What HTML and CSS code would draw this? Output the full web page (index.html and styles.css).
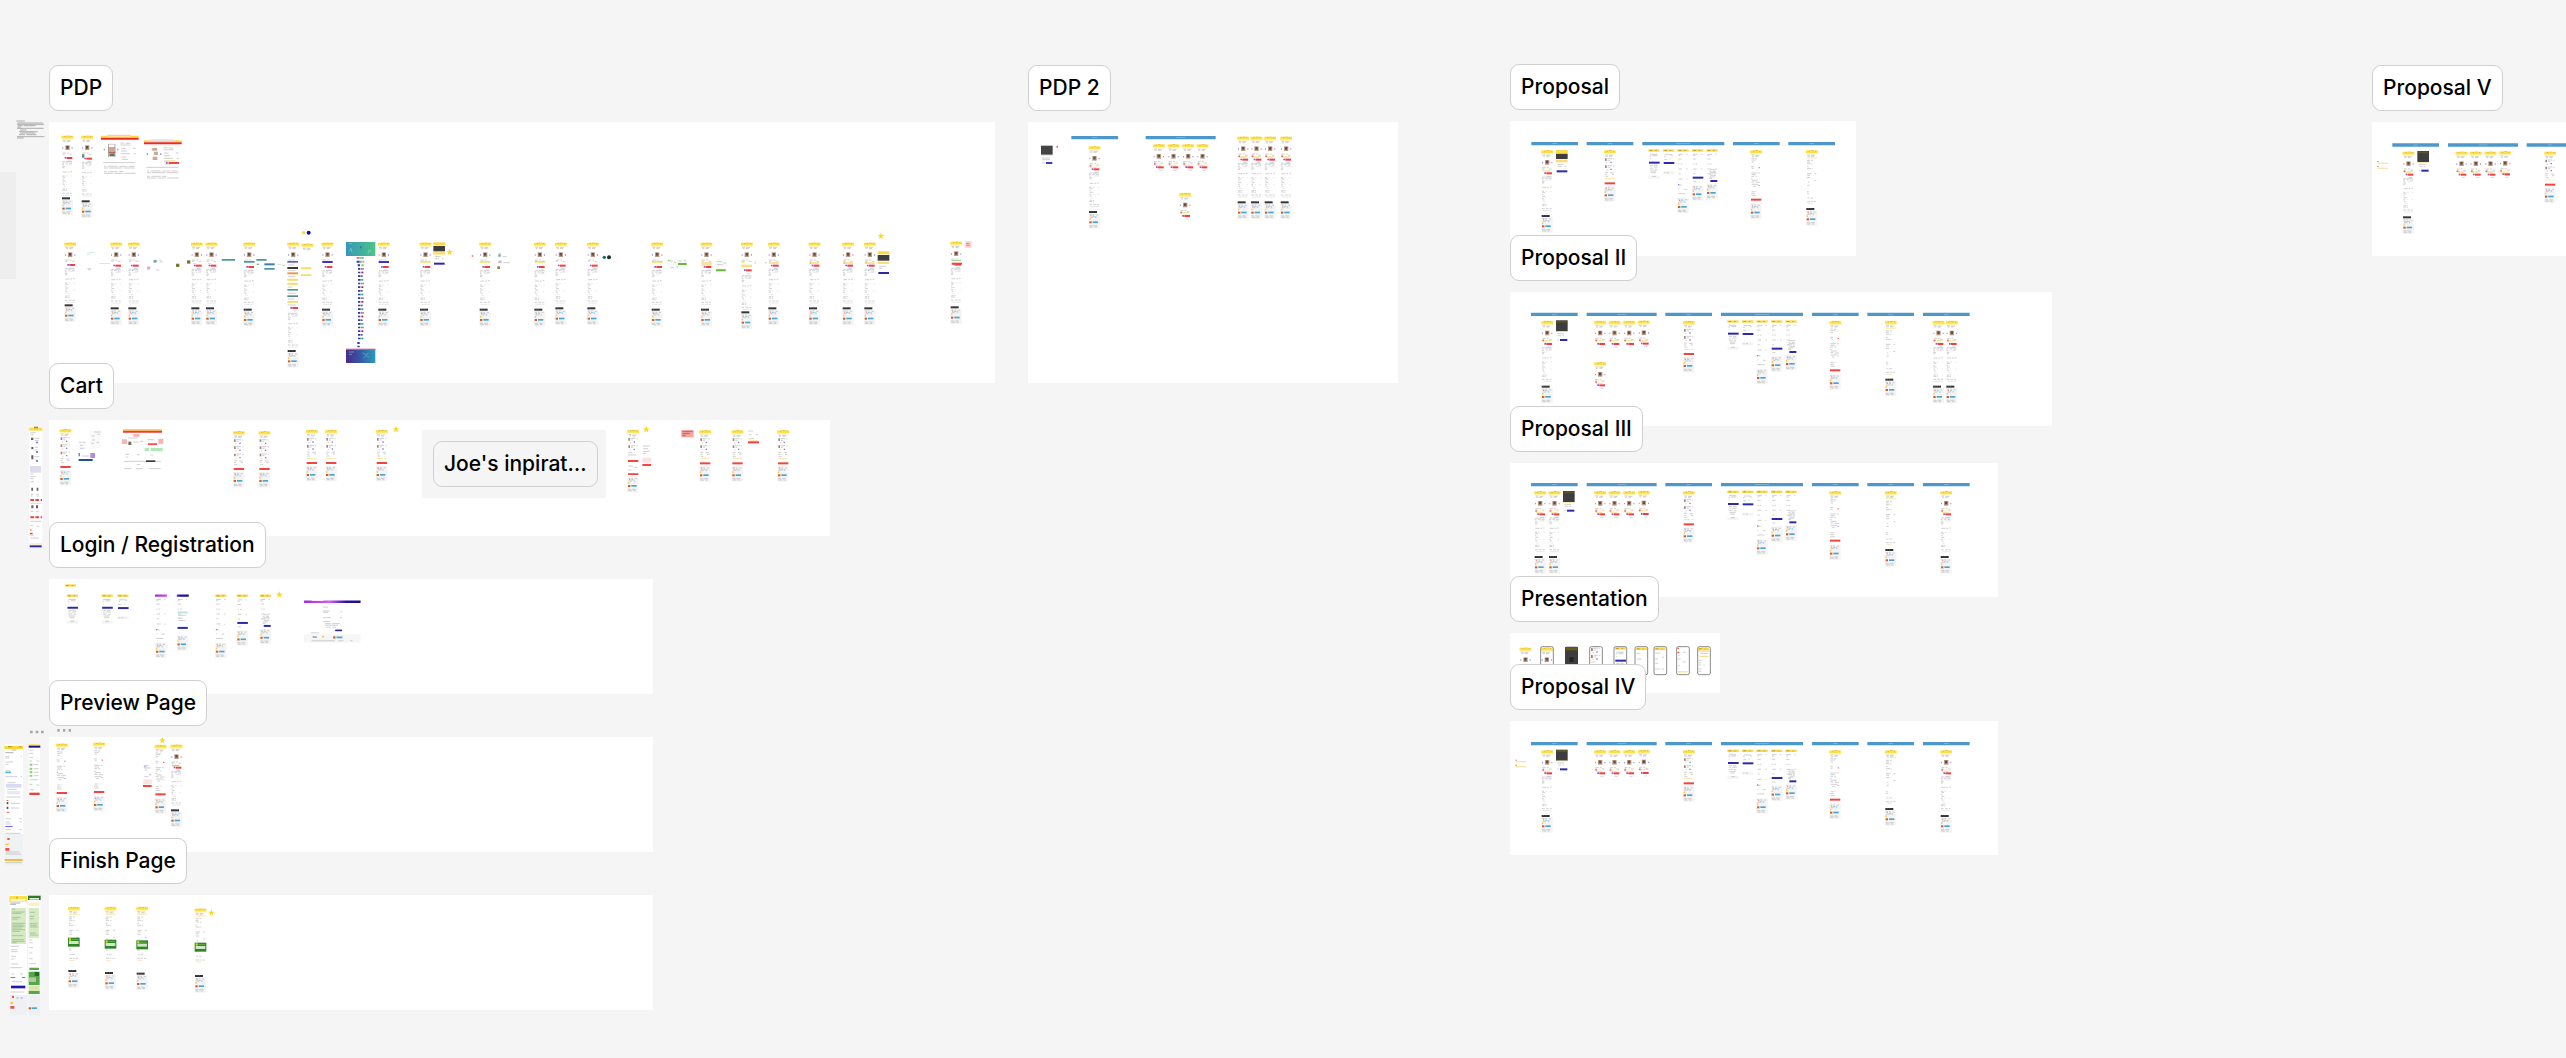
FILE: index.html
```
<!DOCTYPE html>
<html lang="en">
<head>
<meta charset="utf-8">
<title>Checkout flow board</title>
<link rel="stylesheet" href="styles.css">
</head>
<body>
<!-- Shared miniature screens. One board pixel is three drawing units. -->
<svg class="library" aria-hidden="true">
  <defs>
    <linearGradient id="teal"><stop offset="0" stop-color="#3796b8"/><stop offset="1" stop-color="#4cc487"/></linearGradient>
    <linearGradient id="night"><stop offset="0" stop-color="#4c2a85"/><stop offset=".5" stop-color="#3659a5"/><stop offset="1" stop-color="#2b9bba"/></linearGradient>
    <linearGradient id="violet"><stop offset="0" stop-color="#a02bd8"/><stop offset=".45" stop-color="#d95cea"/><stop offset=".75" stop-color="#2a1099"/><stop offset="1" stop-color="#1d0d91"/></linearGradient>

    <path id="star" fill="#fbd92b" d="M0-10L3-3 10-3 4 2 6 9 0 5-6 9-4 2-10-3-3-3z"/>

    <g id="head">
      <path fill="#fff3ae" d="M0 1h35v13H0z"/>
      <path fill="#fde047" d="M0 3h35v7H0z"/>
      <path fill="#dcb83a" d="M8 3h4v3H8zm7-1h8v2h-8zm12 1h3v3h-3z"/>
      <path class="ink" d="M3 16h9m3 1h12M5 20h6m4 0h9"/>
    </g>
    <g id="photo">
      <path fill="#b99d88" d="M11 31h13v14H11z"/>
      <path fill="#6d4a3b" d="M14 33h7v8h-7z"/>
      <path fill="#8f93f2" d="M2 37h3v4H2zm28 0h3v4h-3z"/>
      <path class="ink" d="M3 54h10m3 0h6M3 58h6m14 0h8"/>
    </g>
    <g id="cta">
      <path fill="#6b63f0" d="M9 1h5v5H9z"/>
      <path fill="#fb3b3b" d="M15 1h17v6H15z"/>
      <path fill="#c5c5fa" d="M18 12h10v2H18z"/>
    </g>
    <g id="body">
      <path class="ink" d="M3 2h8m2 0h18M1 6h6m4 0h8m3 1h9M2 11h5M2 16h8M2 20h6M3 33h12m3 0h5m3-1h5M2 45h6M3 49h8M2 55h4M3 60h9M2 66h5M4 71h5M3 84h7m2 0h4M2 88h8m2 1h3M2 97h8m4 0h8m3 0h6"/>
      <path class="ink-soft" d="M14 11h16M12 45h6m10 0h4M12 66h3m12 0h4M6 77h7M4 103h27"/>
    </g>
    <g id="mini">
      <path fill="#f4f4f4" d="M0 0h34v46H0z"/>
      <path class="ink" d="M3 4h6m3 0h5m6 1h6M4 12h10m5 0h5M2 37h9m3 0h12M3 41h11m4 0h7"/>
      <path fill="#f28e82" d="M5 6h4v3H5z"/>
      <path fill="#8dc9ef" d="M12 7h6v3h-6zm8 1h3v2h-3z"/>
      <path fill="#ffc94d" d="M2 15h4v5H2z"/>
      <path fill="#d0602a" d="M2 24h7v6H2z"/>
      <path fill="#4aa5d3" d="M12 24h16v5H12z"/>
    </g>
    <g id="foot">
      <use href="#mini" y="7"/>
      <path fill="#333" d="M1 0h24v6H1z"/>
      <path fill="#777" d="M6 1h2v2H6zm7 0h2v2h-2z"/>
    </g>

    <g id="top"><use href="#head"/><use href="#photo"/></g>
    <g id="pdp"><use href="#top"/><use href="#cta" y="67"/><use href="#body" y="80"/><use href="#foot" y="196"/></g>
    <g id="pdp-short"><use href="#top"/><use href="#cta" y="65"/><use href="#body" y="78"/><use href="#foot" y="187"/></g>
    <g id="pdp-bar"><use href="#top"/><use href="#cta" y="71"/><use href="#body" y="84"/><use href="#foot" y="200"/></g>
    <g id="offer"><path fill="#f8dc8e" d="M2 60h28v2H2zm3 4h20v2H5z"/><path fill="#f4635a" d="M3 59h5v4H3z"/></g>
    <g id="pdp-offer"><use href="#pdp"/><use href="#offer"/></g>
    <g id="teaser"><use href="#top"/><use href="#offer"/><use href="#cta" y="67"/></g>

    <g id="item">
      <path fill="#9b8983" d="M3 1h5v8H3z"/>
      <path class="ink" d="M10 2h14m3 1h4M11 7h6"/>
      <path fill="#7777ee" d="M19 11h4v4h-4z"/>
      <path fill="#f6c8c0" d="M7 13h4v3H7z"/>
    </g>
    <g id="cart">
      <use href="#head"/><use href="#item" y="25"/><use href="#item" y="46"/><use href="#item" y="68"/>
      <path class="ink" d="M3 90h9m7 1h10M3 96h6m14 0h7M4 102h9"/>
      <path fill="#f5433f" d="M2 112h31v6H2z"/><use href="#mini" y="124"/>
    </g>
    <g id="cart-short">
      <use href="#head"/><use href="#item" y="25"/><use href="#item" y="46"/>
      <path class="ink" d="M3 68h9m7 1h10M3 74h6m14 0h7M4 80h9"/>
      <path fill="#f8dc8e" d="M3 86h18v2H3zm21 0h7v2h-7z"/>
      <path fill="#f5433f" d="M2 98h31v6H2z"/><use href="#mini" y="110"/>
    </g>
    <g id="preview">
      <use href="#head"/>
      <path class="ink" d="M3 26h8m3 1h6M3 31h13M4 37h7M2 51h9M4 56h6M3 70h16m3 0h6M4 75h12M3 80h8m4 0h5M5 92h17M3 97h9m4 1h13M4 104h20M8 110h8M4 126h9m3 0h3M2 132h12M3 138h14"/>
      <path fill="#f4635a" d="M25 53h4v3h-4z"/><path fill="#a9a5f0" d="M3 86h3v3H3zm21 20h5v2h-5z"/>
      <path fill="#f5433f" d="M2 147h31v6H2z"/><use href="#mini" y="162"/>
    </g>
    <g id="receipt">
      <use href="#head"/><path fill="#fdedb8" d="M2 22h32v4H2z"/>
      <path class="ink" d="M3 32h9m3 0h6M3 37h8M3 42h10m3 1h4M3 51h5M3 57h12m2 0h3M3 72h13m9 0h6M4 77h8M3 84h10M6 98h4m15-5h6M4 107h7M3 126h5M3 131h7M5 145h5m3 0h8M3 156h10m2 0h5m3 0h7"/>
      <path fill="#f3dcae" d="M5 161h14v2H5z"/>
    </g>
    <g id="finish"><use href="#receipt"/><use href="#foot" y="175"/></g>
    <g id="voucher">
      <path fill="#2f8527" d="M0 0h35v27H0z"/><path fill="#cfe7c5" d="M3 10h29v9H3z"/><path fill="#e9d42e" d="M3 2h6v7H3z"/><path fill="#5aaa43" d="M11 4h20v3H11z"/>
      <use href="#foot" y="97"/>
    </g>

    <g id="bar"><path fill="#fbd94b" d="M0 1h34v7H0z"/><path fill="#c29d2c" d="M4 3h8v3H4zm16 1h6v2h-6z"/></g>
    <g id="login-a">
      <use href="#bar"/>
      <path class="ink" d="M5 16h22M3 21h5m4-1h14M4 29h3M5 49h9m3 0h10M6 54h5m4 0h13M4 60h12m4 1h7M6 66h19M8 71h15"/>
      <path fill="#2c29ad" d="M2 38h32v6H2z"/><path fill="#f4f4f4" d="M0 80h34v9H0z"/><path class="ink" d="M11 82h12"/>
    </g>
    <g id="login-b">
      <use href="#bar"/><path class="ink" d="M5 17h22M3 22h5m17-2h5M4 31h8m8-1h3"/>
      <path fill="#2c29ad" d="M2 39h32v6H2z"/><path fill="#f4f4f4" d="M0 67h34v9H0z"/><path class="ink" d="M4 71h4m4 0h6"/>
    </g>
    <g id="fields"><path class="ink" d="M3 16h14m10 0h4M3 20h6M3 30h10M3 45h4m3 0h5M4 60h10m13 0h4M4 74h6"/></g>
    <g id="login-c">
      <use href="#fields"/>
      <path class="ink" d="M4 90h12m11 1h3M5 108h8M3 120h3m14 1h8M3 134h21"/><path fill="#8b84ec" d="M2 105h4v4H2z"/>
      <use href="#mini" y="147"/>
    </g>
    <g id="login-d"><use href="#fields"/><path fill="#2c29ad" d="M2 83h32v6H2z"/><path class="ink" d="M4 98h9"/><use href="#mini" y="109"/></g>
    <g id="login-e">
      <use href="#fields"/><path class="ink" d="M12 62h15M9 67h6m4 0h9M11 71h18M8 75h12m3 0h5M12 80h17M10 84h14M8 88h9"/>
      <path fill="#2c29ad" d="M12 93h21v6H12z"/><use href="#mini" y="105"/>
    </g>
    <g id="login-set">
      <use href="#login-a"/><use href="#login-b" x="44"/><use href="#bar" x="87"/><use href="#login-c" x="87"/><use href="#bar" x="131"/><use href="#login-d" x="131"/><use href="#bar" x="174"/><use href="#login-e" x="174"/>
    </g>

    <g id="dark"><path fill="#3e3e3e" d="M0 0h35v33H0z"/><path fill="#57532b" d="M2 1h31v6H2z"/><path fill="#f6df92" d="M2 33h32v2H2z"/>
      <path class="ink" d="M4 40h20M5 46h10m4 0h5M4 58h5"/><path fill="#2c29ad" d="M12 56h22v6H12z"/></g>
    <g id="modal"><path fill="#fbd94b" d="M0 1h35v9H0z"/><path fill="#3e3e3e" d="M0 12h35v16H0z"/><path fill="#f9dd7b" d="M0 30h35v8H0z"/>
      <path class="ink" d="M4 44h18M5 50h12m8 0h6"/><path fill="#2c29ad" d="M2 62h32v6H2z"/></g>

    <g id="strip"><path fill="#4d97cb" d="M0 0h140v10H0z"/><path fill="#8dbfe2" d="M63 4h14v2H63z"/></g>
    <g id="strip-wide"><path fill="#4d97cb" d="M0 0h210v10H0z"/><path fill="#8dbfe2" d="M92 4h27v2H92z"/></g>
    <g id="strip-login"><path fill="#4d97cb" d="M0 0h246v10H0z"/><path fill="#8dbfe2" d="M102 4h42v2h-42z"/></g>

    <g id="flow">
      <use href="#strip" x="93"/><use href="#strip-wide" x="260"/><use href="#strip" x="496"/><use href="#strip-login" x="663"/>
      <use href="#strip" x="936"/><use href="#strip" x="1102"/><use href="#strip" x="1269"/>
      <use href="#teaser" x="283" y="23"/><use href="#teaser" x="326" y="23"/><use href="#teaser" x="370" y="23"/><use href="#teaser" x="414" y="22"/>
      <use href="#cart-short" x="549" y="23"/><use href="#login-set" x="682" y="22"/>
      <use href="#preview" x="988" y="23"/><use href="#finish" x="1155" y="23"/>
    </g>
  </defs>
</svg>

<main class="canvas">
  <div class="offstage" aria-hidden="true"></div>

  <svg class="loose" viewBox="0 0 225 3174" aria-hidden="true">
    <g transform="translate(0 150)">
      <path class="note" d="M49 213h26M52 219h76M51 223h81M54 227h14m3 0h36M52 231h11M51 235h80M60 240h19M57 245h56M60 249h46M57 254h18m4 0h30M51 260h82M51 264h20"/>
    </g>
    <g transform="translate(0 1200)">
      <path fill="#fff" d="M88 80h39v364H88z"/>
      <path fill="#fbd94b" d="M88 83h39v9H88z"/><path fill="#b08b2a" d="M102 80h12v5h-12z"/>
      <path class="ink" d="M91 98h16M92 104h9M104 115h14M104 122h12M104 142h10M104 150h8M104 170h14M104 180h8M92 222h8M92 230h16M91 236h10M92 245h10M92 283h9m8 0h7M92 288h6m12 0h8M92 334h9m8 0h7M91 364h33M91 376h9m10 3h7M92 406h9M91 414h26"/>
      <path fill="#6b5d60" d="M93 113h7v7h-7zm1 28h6v7h-6zm0 25h6v12h-6zm0 97h5v9h-5zm16 0h5v9h-5zm-16 53h6v9h-6zm14 0h6v9h-6z"/>
      <path fill="#7777ee" d="M108 125h6v5h-6zm0 28h6v5h-6zm0 28h6v5h-6z"/>
      <path fill="#dcdcec" d="M90 198h33v20H90z"/>
      <path fill="#ef423f" d="M91 297h11v6H91zm15 0h11v6h-11zm16 0h4v6h-4zM91 349h11v6H91zm15 0h11v6h-11zm16 0h4v6h-4zM90 398h8v5h-8z"/>
      <path fill="#f2a72e" d="M90 388h5v4h-5z"/><path fill="#b8d8ec" d="M91 309h33v2H91z"/>
      <path fill="#fbe9b0" d="M89 430h37v4H89z"/><path fill="#2c29ad" d="M89 436h36v6H89z"/>
    </g>
    <g transform="translate(0 2040)">
      <path fill="#a6a6a6" d="M90 152h8v8h-8zm17 0h8v8h-8zm16 0h8v8h-8zM172 147h7v8h-7zm17 0h7v8h-7zm17 0h7v8h-7z"/>
      <path fill="#fff" d="M14 192h55v270H14z"/><path fill="#f0f1f3" d="M14 462h55v95H14z"/>
      <path fill="#fdd835" d="M13 198h56v9H13z"/><path fill="#b08b2a" d="M24 199h12v3H24zm34 0h6v3h-6z"/>
      <path class="note" d="M35 210h14M16 218h24"/>
      <path class="ink" d="M16 229h12m34 0h4M16 234h12M17 246h22M17 253h9M16 272h14M16 290h36m10 0h4M22 308h24M22 328h28M18 351h44M31 370h28M32 384h26M17 416h15m26 0h8M17 426h12m31 0h6M17 432h16M16 449h17m25 0h8M16 460h46M18 516h40M17 522h46M16 548h50"/>
      <path fill="#d9dcf0" d="M18 312h46v11H18z"/><path fill="#e7e9f3" d="M22 333h38v10H22z"/>
      <path fill="#53525a" d="M20 366h5v7h-5zm0 14h5v7h-5z"/><path fill="#49b2df" d="M16 275h17v4H16z"/>
      <path fill="#ef5350" d="M16 504h12v8H16zM22 474h7v6h-7zM20 360h5v3h-5zm0 35h8v3h-8z"/><path fill="#6b63f0" d="M16 438h22v3H16z"/>
      <path fill="#fbc52b" d="M16 491h10v4H16z"/><path fill="#f6bd3c" d="M14 537h54v6H14z"/>
      <path fill="#fff" d="M86 192h34v154H86z"/><path fill="#fbd94b" d="M86 193h34v4H86z"/><path fill="#1b168c" d="M86 197h35v6H86z"/>
      <path class="ink" d="M89 211h10M88 220h12M89 233h10M88 243h8m14 0h8M100 254h15M101 266h15M101 277h15M101 287h15M89 299h24M88 313h10m12 2h8M90 329h12"/>
      <path fill="#8bd06b" d="M89 251h8v6h-8zm0 12h8v6h-8zm0 11h8v6h-8zm0 11h8v5h-8z"/><path fill="#e8413f" d="M88 338h31v7H88z"/>

      <path fill="#fff" d="M29 645h52v362H29zm56 0h36v362H85z"/>
      <path fill="#fbe04d" d="M28 648h53v17H28z"/><path fill="#f58c28" d="M49 650h4v6h-4z"/><path fill="#fff6c4" d="M33 657h43v6H33z"/>
      <path fill="#2d7a2c" d="M84 647h38v13H84z"/><path fill="#dff0d4" d="M88 654h29v5H88z"/><path fill="#fdf0bf" d="M86 668h32v10H86z"/>
      <path class="note" d="M31 669h30M31 673h17"/>
      <path fill="#d6eac4" d="M33 684h45v108H33zm53 0h31v90H86z"/>
      <path fill="none" stroke="#93b585" stroke-width="2" d="M36 688h10M36 696h38M36 700h28M36 712h26M36 717h19M36 730h39M36 735h34M36 739h38M36 744h30M36 749h39M36 754h24M36 767h34M36 779h36M36 784h38M36 788h14M90 697h15M90 709h13M90 716h11M90 731h23M90 736h20M90 741h23M90 759h17M90 765h24"/>
      <path class="ink" d="M31 799h26M33 809h18M33 815h20M34 829h14M33 837h10M33 852h22M31 863h36M33 882h10m17 0h9M36 905h30M31 936h42M40 952h24M33 988h12M32 996h40M88 780h8M88 788h10M88 803h11M88 819h9M88 836h10M88 851h20M88 951h16M88 972h8M88 997h16"/>
      <path fill="#7b77dd" d="M32 891h14v3H32zm34 0h10v3H66z"/><path fill="#2418a0" d="M33 917h43v8H33z"/>
      <path fill="#eef0f4" d="M29 945h52v62H29zm56 0h36v62H85z"/>
      <path fill="#ef5350" d="M31 978h12v8H31zm5-31h6v7h-6z"/><path fill="#fbc52b" d="M31 966h9v5h-9z"/>
      <path fill="#b3c5dd" d="M62 951h6v5h-6zm-12 0h5v5h-5z"/>
      <path fill="#55a846" d="M88 863h29v7H88zm-2 12h33v40H86zm0 58h33v9H86z"/><path fill="#b6c5a6" d="M87 892h21v14H87z"/><path fill="#226b2a" d="M104 876h13v12h-13z"/><path fill="#d7e7a9" d="M86 917h33v16H86z"/>
      <path fill="#d0602a" d="M86 982h7v6h-7z"/><path fill="#4aa5d3" d="M95 982h16v5H95z"/>
    </g>
  </svg>

  <section class="frame pdp">
    <h2 class="label">PDP</h2>
    <svg class="board" viewBox="147 213 2838 783" aria-hidden="true">
      <use href="#pdp-short" x="185" y="252"/><use href="#pdp" x="244" y="252"/>
      <path fill="#5d8c83" d="M246 310h7v10h-7z"/>
      <g id="desk"><path fill="#fbd94b" d="M303 254h113v6H303z"/><path fill="#fff" d="M322 253h70v3h-70z"/><path fill="#ee2a24" d="M303 260h113v6H303z"/>
        <path class="ink" d="M322 253h70M324 280h20M361 276h12m4 1h14M361 282h30M363 292h14m22 0h8M363 300h18M362 308h28m11 0h7M363 318h16M366 325h18M310 335h96M312 346h7m4 0h30m5 0h24m4 0h18M312 351h12m3 0h40m4 0h34M312 362h9m4 0h28m4 0h14M312 367h28m4 0h24m5 0h34"/>
        <path fill="#9796ee" d="M311 293h4v5h-4zm40 0h4v5h-4z"/></g>
      <path fill="#c9a792" d="M326 288h18v14h-18z"/><path fill="#cd5b55" d="M326 302h20v4h-20z"/><path fill="#4f7d56" d="M328 307h16v9h-16z"/><path fill="#8b7a72" d="M324 280h2v38h-2zm20 0h2v38h-2z"/>
      <use href="#desk" x="129" y="14"/>
      <path fill="#c6ab98" d="M457 291h14v8h-14zm5 11h12v10h-12zm-4 15h14v10h-14z"/><path fill="#f8dc8e" d="M494 328h32v3h-32z"/><path fill="#6b63f0" d="M498 333h5v5h-5z"/><path fill="#f5433f" d="M506 333h31v6h-31z"/>

      <circle cx="911" cy="545" r="5" fill="#fdd835"/><circle cx="926" cy="545" r="6" fill="#17129a"/>
      <use href="#pdp-short" x="193" y="573"/><use href="#pdp" x="331" y="573"/><use href="#pdp" x="384" y="573"/>
      <use href="#pdp" x="573" y="573"/><use href="#pdp" x="617" y="573"/><use href="#pdp-bar" x="730" y="573"/>
      <path fill="#cdeee2" d="M262 604h22v3h-22zm-2 5h10v2h-10zm38 27h32v3h-32z"/><path class="ink" d="M262 653h11m-9 3h8"/>
      <path class="ink" d="M463 628h10m4 0h8M460 632h12m8 1h8M441 650h12M440 656h10m18 1h10"/><path fill="#77a89a" d="M461 627h8v8h-8z"/><path fill="#d9a8dc" d="M442 646h7v8h-7z"/>
      <g id="olive"><path fill="#84843a" d="M528 638h10v10h-10z"/><path fill="#4f5124" d="M531 641h4v4h-4z"/></g>
      <use href="#olive" x="33" y="-10"/>
      <path fill="#cdeee2" d="M578 636h10v3h-10zm46 0h10v3h-10z"/>
      <path fill="#4d9c9b" d="M665 624h40v5h-40zm67 6h32v5h-32zm37-6h31v5h-31zm1 14h7v3h-7zm23 13h31v5h-31z"/><path fill="#4179bd" d="M793 637h31v6h-31z"/><path class="ink" d="M833 640h10m2 3h10"/>
      <use href="#top" x="862" y="573"/>
      <path fill="#5b59cf" d="M862 630h32v5h-32z"/><path fill="#3a3a3a" d="M862 648h32v6h-32z"/><path fill="#ea9a48" d="M862 664h32v6h-32z"/><path fill="#f8dc5a" d="M862 683h32v6h-32zm0 13h32v5h-32zm0 54h32v5h-32zm41-101h31v6h-31zm0 21h31v5h-31z"/><path fill="#4d9c9b" d="M862 714h32v5h-32z"/><path fill="#5c8588" d="M862 733h32v5h-32z"/>
      <path class="ink" d="M864 642h20M863 659h23M864 677h22M864 708h13M863 727h24M864 744h20M863 762h25"/>
      <use href="#cta" x="862" y="767"/><use href="#body" x="862" y="785"/><use href="#foot" x="862" y="897"/>
      <use href="#head" x="905" y="576"/>
      <use href="#pdp-bar" x="965" y="573"/><use href="#pdp-bar" x="1134" y="573"/>
      <path fill="#3b36c8" d="M967 630h31v6h-31zm169 0h31v6h-31z"/>
      <path fill="url(#teal)" d="M1038 573h88v42h-88z"/><path fill="none" stroke="#83d8cd" stroke-width="2" d="M1048 600l5-8 3 12m48 4l4-12 6 8M1046 578h9"/><path fill="#2b6fae" d="M1080 586h4v6h-4z"/>
      <g id="chips"><path fill="#2d35a5" d="M1074 651h7v5h-7zm0 11h7v5h-7zm0 11h7v5h-7zm0 11h7v5h-7z"/><path fill="#4f9bd2" d="M1083 651h3v5h-3zm-3 33h3v5h-3z"/><path fill="#8a4f8c" d="M1087 651h4v5h-4z"/><path fill="#a02839" d="M1084 662h6v5h-6z"/><path fill="#30a57d" d="M1084 684h6v5h-6z"/><path fill="#6d4f8f" d="M1082 673h6v5h-6z"/></g>
      <use href="#chips" y="44"/><use href="#chips" y="88"/><use href="#chips" y="132"/><use href="#chips" y="176"/>
      <path fill="#3536b5" d="M1070 629h9v6h-9zm3 11h7v6h-7zm-1 233h7v6h-7zm0 11h7v5h-7z"/><path fill="#32b7e6" d="M1080 629h5v6h-5zm5-11h6v5h-6z"/><path fill="#f0a04b" d="M1087 629h6v6h-6z"/><path fill="#e0578e" d="M1070 618h8v5h-8z"/><path fill="#84d052" d="M1078 618h7v5h-7zm6 22h7v6h-7z"/>
      <path fill="url(#night)" d="M1038 894h88v42h-88z"/><path fill="#e4577c" d="M1038 893h88v4h-88z"/><path fill="none" stroke="#68b5d9" stroke-width="2" d="M1088 905l8 6 10-4m-16 14l9-7 8 5M1046 903h16M1046 910h10"/>
      <use href="#pdp-bar" x="1259" y="573"/><use href="#modal" x="1300" y="573"/><use href="#star" x="1349" y="603"/>
      <use href="#pdp-bar" x="1438" y="573"/>
      <path fill="#f9df6b" d="M1261 630h31v5h-31zm178 0h32v5h-32zm165 0h32v5h-32zm352 0h32v5h-32z"/>
      <path fill="#f4635a" d="M1415 613h5v4h-5z"/><path class="ink" d="M1496 608h8m4 9h12M1496 615h8m-6 14h8m4 6h20M1496 635h10"/><path fill="#77a89a" d="M1495 610h7v7h-7z"/><path fill="#d9a8dc" d="M1495 630h7v6h-7z"/><path fill="#84843a" d="M1492 646h8v8h-8z"/>
      <use href="#pdp-bar" x="1602" y="573"/><use href="#pdp" x="1665" y="573"/><use href="#pdp" x="1761" y="573"/>
      <circle cx="1813" cy="619" r="5" fill="#10706e"/><circle cx="1827" cy="619" r="6" fill="#14322f"/>
      <use href="#pdp-bar" x="1954" y="573"/><use href="#pdp-bar" x="2102" y="573"/>
      <path fill="#f7faf7" d="M2002 624h60v32h-60zm144 0h34v43h-34z"/><path fill="#6cb541" d="M2034 636h26v6h-26zm114 19h29v6h-29z"/><path class="ink" d="M2010 630h8m4 4h6M2035 630h10m6 0h7M2012 650h9m8-2h6M2150 632h16m4 4h8M2150 641h18"/><path fill="#8bd06b" d="M2004 627h5v4h-5z"/>
      <use href="#top" x="2223" y="573"/><path fill="#f8e07e" d="M2224 630h10v5h-10zm0 11h32v8h-32zm40-12h4v4h-4zm-1 7h5v3h-5z"/><use href="#cta" x="2223" y="654"/><use href="#body" x="2223" y="672"/><use href="#foot" x="2223" y="781"/>
      <use href="#pdp" x="2304" y="573"/><use href="#pdp" x="2426" y="573"/><use href="#pdp" x="2527" y="573"/><use href="#pdp" x="2592" y="573"/>
      <path fill="#fae3a0" d="M2104 633h31v11h-31zm202 0h30v6h-30zm122 0h30v6h-30zm101 0h30v6h-30zm65 0h30v6h-30z"/><path fill="#e6b04e" d="M2430 634h3v4h-3zm101 0h3v4h-3zm66 0h3v4h-3zm-301-1h3v4h-3z"/>
      <use href="#star" x="2643" y="555"/>
      <path fill="#fbd94b" d="M2633 601h35v9h-35z"/><path fill="#3e3e3e" d="M2633 612h35v17h-35z"/><path fill="#f9dd7b" d="M2633 632h35v7h-35z"/><path class="ink" d="M2637 646h20M2637 652h10"/><path fill="#2c29ad" d="M2635 663h32v6h-32z"/>
      <use href="#pdp" x="2851" y="570"/><path fill="#f5433f" d="M2855 635h31v6h-31z"/><path fill="#a8d0a0" d="M2855 627h28v3h-28z"/>
      <path fill="#f9c9cb" d="M2896 571h18v19h-18z"/><path fill="#d88f92" d="M2899 576h8v3h-8zm0 5h10v3h-10z"/>
    </svg>
  </section>

  <section class="frame pdp-2">
    <h2 class="label">PDP 2</h2>
    <svg class="board" viewBox="24 213 1110 783" aria-hidden="true">
      <path fill="#444" d="M63 284h35v27H63z"/><path fill="#f6df92" d="M64 313h33v2H64z"/><path class="ink" d="M66 321h24M66 326h24M66 336h9"/><path fill="#3e3bbb" d="M78 333h19v6H78z"/><path fill="#f07a80" d="M109 284h5v6h-5z"/>
      <use href="#strip" x="154" y="255"/><use href="#strip-wide" x="377" y="255"/>
      <use href="#pdp-offer" x="206" y="284"/>
      <use href="#teaser" x="399" y="278"/><use href="#teaser" x="443" y="278"/><use href="#teaser" x="487" y="278"/><use href="#teaser" x="530" y="278"/>
      <use href="#teaser" x="478" y="424"/>
      <use href="#pdp-offer" x="652" y="255"/><use href="#pdp-offer" x="692" y="255"/><use href="#pdp-offer" x="733" y="255"/><use href="#pdp-offer" x="781" y="255"/>
    </svg>
  </section>

  <section class="frame cart">
    <h2 class="label">Cart</h2>
    <svg class="board" viewBox="147 60 2343 348" aria-hidden="true">
      <use href="#cart" x="179" y="86"/>
      <path fill="#fafafa" d="M268 92h36v53h-36zm-33 30h25v28h-25z"/><path class="ink" d="M282 96h20M274 108h10m8-5h8M276 120h9M274 130h8m7-3h8M238 127h6m4 0h8M240 136h8M240 145h12M246 168h22"/>
      <path fill="#1f4ea5" d="M236 177h42v6h-42zm0-18h3v10h-3z"/><path fill="#b388e6" d="M271 159h14v15h-14z"/>
      <path fill="#fbd94b" d="M369 87h117v5H369z"/><path fill="#ee3a30" d="M369 92h117v6H369z"/><path fill="#f5b5b0" d="M400 102h18v8h-18zm-34 16h15v14h-15zm109-2h15v15h-15z"/><path fill="#f5433f" d="M444 130h27v5h-27z"/><path fill="#afe9b6" d="M434 144h13v10h-13zm19 0h35v10h-35z"/><path fill="#7a6c5f" d="M385 125h9v10h-9z"/>
      <path class="ink" d="M384 114h28M398 126h18M420 124h10M442 119h20M376 163h12m23 1h8m32 1h8M378 171h7M371 184h112M410 194h10M372 206h22m14 0h20m20 0h34"/><path fill="#3a3a3a" d="M438 181h28v5h-28z"/>
      <use href="#cart" x="699" y="92"/><use href="#cart" x="776" y="92"/>
      <use href="#cart-short" x="918" y="88"/><use href="#cart-short" x="976" y="88"/><use href="#cart-short" x="1128" y="88"/><use href="#star" x="1188" y="88"/>
      <path fill="#f5f5f5" d="M1266 90h552v204h-552z"/>
      <use href="#head" x="1882" y="88"/><use href="#item" x="1882" y="113"/><use href="#item" x="1882" y="135"/><path class="ink" d="M1885 158h12M1884 165h24M1885 198h14m3 4h10M1885 210h9"/><path fill="#f5433f" d="M1884 180h31v6h-31zm0 40h31v5h-31zm43-28h26v6h-26z"/><use href="#mini" x="1882" y="231"/>
      <use href="#star" x="1939" y="88"/><path class="ink" d="M1929 138h20M1930 146h14M1929 154h20M1930 160h9"/><path fill="#fae3e3" d="M1927 173h26v15h-26z"/>
      <path fill="#f8a7a0" d="M2044 90h37v22h-37z"/><path fill="none" stroke="#b46661" stroke-width="3" d="M2047 95h31M2047 101h22M2047 107h10"/>
      <use href="#cart-short" x="2098" y="89"/><use href="#cart-short" x="2195" y="89"/><use href="#cart-short" x="2332" y="89"/>
      <path class="ink" d="M2245 93h14M2246 104h6m16 0h6M2247 116h14"/><path fill="#e8423f" d="M2244 124h33v6h-33z"/><path fill="#f8dc8e" d="M2248 120h26v2h-26z"/>
    </svg>
  </section>

  <section class="frame inspiration">
    <h2 class="label">Joe's inpirat…</h2>
  </section>

  <section class="frame login">
    <h2 class="label">Login / Registration</h2>
    <svg class="board" viewBox="147 534 1812 348" aria-hidden="true">
      <use href="#bar" x="187" y="549"/>
      <use href="#login-a" x="193" y="580"/><use href="#login-a" x="298" y="580"/><use href="#login-b" x="346" y="580"/>
      <path fill="url(#violet)" d="M460 581h36v7h-36zm66 0h36v7h-36z"/><use href="#login-c" x="461" y="580"/>
      <use href="#fields" x="526" y="580"/><path class="ink" d="M530 644h22M530 652h14M531 660h20"/><path fill="#b9e8e4" d="M528 632h31v6h-31z"/><path fill="#2c29ad" d="M528 679h31v6h-31z"/><use href="#mini" x="526" y="705"/>
      <use href="#bar" x="642" y="580"/><use href="#login-c" x="642" y="580"/>
      <use href="#bar" x="707" y="580"/><use href="#login-d" x="707" y="581"/>
      <use href="#bar" x="777" y="580"/><use href="#login-e" x="777" y="580"/><use href="#star" x="836" y="581"/>
      <path fill="url(#violet)" d="M911 599h171v8H911z"/><path fill="#fff" d="M934 597h36v3h-36z"/>
      <path class="ink" d="M968 619h16M967 631h22m32 2h6M969 635h15M968 651h24m28 0h6M969 663h21M975 669h17m4 0h23M974 674h40M978 680h14m5 0h11M932 697h25"/><path fill="#2c29ad" d="M1005 687h21v5h-21z"/>
      <path fill="#f6f6f6" d="M911 701h171v25H911z"/><path class="ink" d="M934 721h70m10 0h16m20 0h8"/><path fill="#d0602a" d="M999 707h7v7h-7zm-62 0h4v4h-4z"/><path fill="#4aa5d3" d="M1009 708h18v5h-18zm-68 0h9v4h-9z"/><path fill="#fbc52b" d="M966 706h5v5h-5z"/>
    </svg>
  </section>

  <section class="frame preview">
    <h2 class="label">Preview Page</h2>
    <svg class="board" viewBox="147 171 1812 345" aria-hidden="true">
      <use href="#preview" x="168" y="189"/><use href="#preview" x="280" y="186"/><use href="#star" x="487" y="181"/><use href="#preview" x="464" y="193"/>
      <path class="ink" d="M432 257h14M432 264h20M434 270h8M433 290h12"/><path fill="#a9a5f0" d="M431 259h8v3h-8zm17 24h6v3h-6z"/><path fill="#fae3e3" d="M430 298h25v15h-25z"/><path fill="#f5433f" d="M429 315h26v6h-26z"/>
      <use href="#pdp" x="512" y="192"/><path fill="#f2c84c" d="M516 255h22v4h-22z"/>
    </svg>
  </section>

  <section class="frame finish">
    <h2 class="label">Finish Page</h2>
    <svg class="board" viewBox="147 645 1812 345" aria-hidden="true">
      <use href="#receipt" x="204" y="679"/><use href="#receipt" x="314" y="679"/><use href="#receipt" x="409" y="679"/><use href="#receipt" x="584" y="684"/>
      <use href="#voucher" x="204" y="773"/><use href="#voucher" x="314" y="779"/><use href="#voucher" x="409" y="781"/><use href="#voucher" x="584" y="788"/>
      <use href="#star" x="634" y="698"/>
    </svg>
  </section>

  <section class="frame proposal-1">
    <h2 class="label">Proposal</h2>
    <svg class="board" viewBox="30 213 1038 405" aria-hidden="true">
      <use href="#strip" x="94" y="276"/><use href="#strip" x="260" y="276"/><use href="#strip-login" x="427" y="276"/><use href="#strip" x="699" y="276"/><use href="#strip" x="865" y="276"/>
      <use href="#pdp" x="124" y="299"/><path fill="#f8dc8e" d="M126 361h24v3h-24z"/><use href="#modal" x="168" y="299"/>
      <use href="#cart-short" x="312" y="299"/><use href="#login-set" x="445" y="297"/><use href="#preview" x="751" y="299"/><use href="#finish" x="918" y="299"/>
    </svg>
  </section>

  <section class="frame proposal-2">
    <h2 class="label">Proposal II</h2>
    <svg class="board" viewBox="30 726 1626 402" aria-hidden="true">
      <use href="#flow" y="788"/>
      <use href="#pdp-offer" x="124" y="811"/><use href="#dark" x="168" y="811"/><use href="#teaser" x="283" y="935"/>
      <use href="#pdp-offer" x="1298" y="811"/><use href="#pdp-offer" x="1338" y="811"/>
    </svg>
  </section>

  <section class="frame proposal-3">
    <h2 class="label">Proposal III</h2>
    <svg class="board" viewBox="30 9 1464 402" aria-hidden="true">
      <use href="#flow" y="69"/>
      <use href="#pdp-offer" x="103" y="92"/><use href="#pdp-offer" x="146" y="92"/><use href="#dark" x="189" y="93"/><use href="#pdp-offer" x="1321" y="92"/>
    </svg>
  </section>

  <section class="frame presentation">
    <h2 class="label">Presentation</h2>
    <svg class="board" viewBox="30 519 630 180" aria-hidden="true">
      <use href="#top" x="59" y="561"/><use href="#top" x="123" y="561"/>
      <rect x="195" y="560" width="39" height="84" rx="4" fill="#3e3e3e"/><path fill="#665d1d" d="M197 562h35v9h-35z"/><path fill="#2b211b" d="M208 592h13v14h-13z"/>
      <use href="#item" x="270" y="563"/><use href="#item" x="270" y="584"/><path fill="#f4635a" d="M273 567h5v5h-5zm0 22h5v5h-5z"/><path class="ink" d="M274 606h12"/>
      <use href="#login-a" x="344" y="561"/>
      <use href="#bar" x="407" y="562"/><use href="#bar" x="463" y="562"/><path class="ink" d="M410 580h11M410 597h14M466 579h14M466 597h8m12-5h6M466 610h9M466 627h13m5 0h8"/>
      <path fill="#f4635a" d="M532 563h5v5h-5zm0 12h6v5h-6z"/><path class="ink" d="M534 587h5m10-10h8M533 597h9m6 9h9M534 616h5"/><path fill="#f8dc5a" d="M533 634h30v3h-30z"/>
      <use href="#bar" x="593" y="562"/><path fill="#f8dc8e" d="M594 571h34v4h-34zm4 16h28v4h-28z"/><path class="ink" d="M600 580h25M596 601h9M596 608h7M596 615h8m5 0h5M596 627h10M596 634h8"/>
      <g fill="none" stroke="#8b8b8b" stroke-width="3"><rect x="122" y="560" width="38" height="84" rx="5"/><rect x="269" y="560" width="38" height="84" rx="5"/><rect x="342" y="560" width="38" height="84" rx="5"/><rect x="405" y="560" width="38" height="84" rx="5"/><rect x="462" y="560" width="38" height="84" rx="5"/><rect x="530" y="560" width="38" height="84" rx="5"/><rect x="593" y="560" width="38" height="84" rx="5"/></g>
    </svg>
  </section>

  <section class="frame proposal-4">
    <h2 class="label">Proposal IV</h2>
    <svg class="board" viewBox="30 780 1464 402" aria-hidden="true">
      <g id="memo"><path fill="#f8dc8e" d="M48 901h31v3H48zm0 15h31v3H48z"/><path fill="#d99a49" d="M46 896h5v3h-5zm0 15h5v3h-5z"/></g>
      <use href="#flow" y="843"/>
      <use href="#pdp-offer" x="124" y="866"/><use href="#dark" x="168" y="866"/><use href="#pdp-offer" x="1321" y="866"/>
    </svg>
  </section>

  <section class="frame proposal-5">
    <h2 class="label">Proposal V</h2>
    <svg class="board" viewBox="36 213 1464 402" aria-hidden="true">
      <use href="#memo" x="5" y="-566"/>
      <use href="#flow" x="4" y="277"/>
      <use href="#pdp-offer" x="128" y="300"/><use href="#dark" x="172" y="300"/><use href="#pdp-offer" x="1325" y="300"/>
    </svg>
  </section>
</main>
</body>
</html>
```

FILE: styles.css
```
* {
  box-sizing: border-box;
}

body {
  margin: 0;
  background: #f5f5f5;
  color: #000;
  font-family: Inter, "Liberation Sans", sans-serif;
}

.library {
  position: absolute;
  width: 0;
  height: 0;
}

.canvas {
  position: relative;
  min-height: 100vh;
  overflow: hidden;
}

/* Frames keep their canvas coordinates; label and board stack inside. */
.frame {
  position: absolute;
  display: flex;
  flex-direction: column;
  align-items: flex-start;
  gap: 11px;
}

.label {
  margin: 0;
  padding: 10px;
  border: 1px solid #cfcfcf;
  border-radius: 9px;
  background: #fff;
  font-size: 21px;
  font-weight: 500;
  line-height: 24px;
  white-space: nowrap;
}

.board {
  display: block;
  background: #fff;
}

.loose {
  position: absolute;
  top: 0;
  left: 0;
  width: 75px;
  height: 1058px;
}

.offstage {
  position: absolute;
  top: 172px;
  left: 0;
  width: 16px;
  height: 107px;
  background: #eee;
}

.ink,
.ink-soft,
.note {
  fill: none;
  stroke: #b8b8b8;
  stroke-width: 2;
}

.ink-soft {
  stroke: #ddd;
}

.note {
  stroke: #8a8a8a;
}

.pdp,
.cart,
.login,
.preview,
.finish {
  left: 49px;
}

.pdp,
.pdp-2,
.proposal-5 {
  top: 65px;
}

.pdp .board {
  width: 946px;
  height: 261px;
}

.pdp-2 {
  left: 1028px;
}

.pdp-2 .board {
  width: 370px;
  height: 261px;
}

.cart {
  top: 363px;
}

.cart .board {
  width: 781px;
  height: 116px;
}

.inspiration {
  top: 441px;
  left: 433px;
}

.inspiration .label {
  background: #f5f5f5;
}

.login {
  top: 522px;
}

.login .board,
.preview .board,
.finish .board {
  width: 604px;
  height: 115px;
}

.preview {
  top: 680px;
}

.finish {
  top: 838px;
}

.proposal-1,
.proposal-2,
.proposal-3,
.presentation,
.proposal-4 {
  left: 1510px;
}

.proposal-1 {
  top: 64px;
}

.proposal-1 .board {
  width: 346px;
  height: 135px;
}

.proposal-2 {
  top: 235px;
}

.proposal-2 .board {
  width: 542px;
  height: 134px;
}

.proposal-3 {
  top: 406px;
}

.proposal-3 .board,
.proposal-4 .board,
.proposal-5 .board {
  width: 488px;
  height: 134px;
}

.presentation {
  top: 576px;
}

.presentation .board {
  width: 210px;
  height: 60px;
}

.proposal-4 {
  top: 664px;
}

.proposal-5 {
  left: 2372px;
}
```
